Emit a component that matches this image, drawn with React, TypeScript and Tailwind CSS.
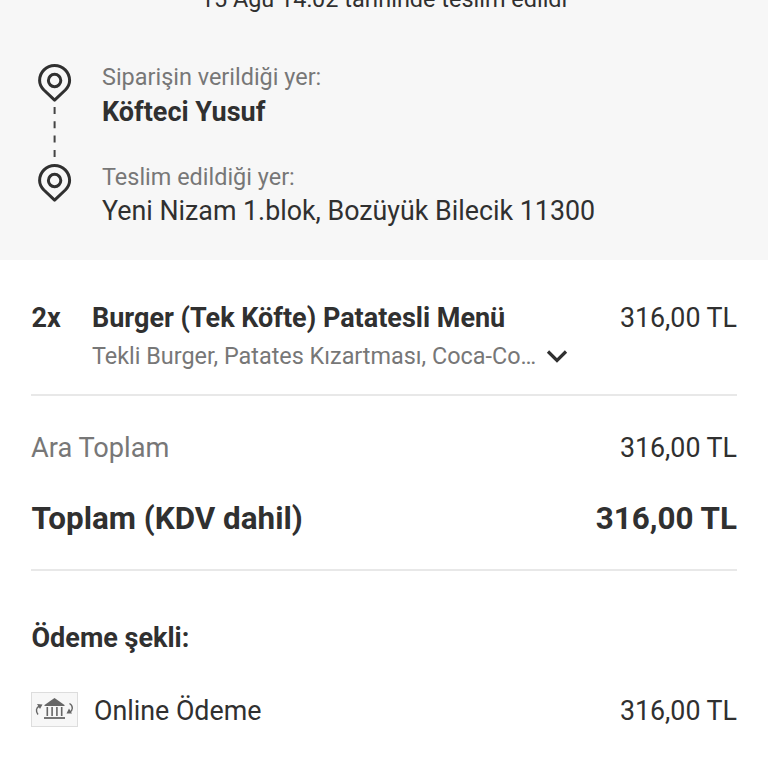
const PRICE = "316,00 TL"

function PinIcon() {
  return (
    <svg className="block h-[40px] w-[36px]" viewBox="0 0 36 40" fill="none" stroke="#303030" strokeWidth="3">
      <path d="M17.6 37.2L6.9 27C4.2 24.2 2.6 21.3 2.6 17.5A15 15 0 0 1 32.6 17.5C32.6 21.3 31 24.2 28.3 27Z" strokeLinejoin="round" />
      <circle cx="17.6" cy="17.5" r="6.2" />
    </svg>
  )
}

function BankIcon() {
  return (
    <svg className="block h-[35px] w-[47px] border border-[#ddd] bg-[#f7f7f7]" viewBox="0 0 45 33" fill="none" stroke="#666">
      <path d="M12.5 12L22.5 5L32.5 12V13H12.5Z" fill="#666" stroke="none" />
      <path d="M15.3 14V23M20.1 14V23M24.9 14V23M29.7 14V23" strokeWidth="1.6" />
      <path d="M12 25H33" strokeWidth="1.8" />
      <path d="M6 21.5C3.5 18 4 14.5 7.5 13M37.5 10.5C41.5 13 41 17.5 37.5 19.5" strokeWidth="1.4" />
      <path d="M5 11L10.5 11.5L8 16ZM37 15.5L34.5 20.5L40 20.5Z" fill="#666" stroke="none" />
    </svg>
  )
}

export default function App() {
  return (
    <div className="h-[768px] w-[768px] overflow-hidden bg-white font-['Roboto',sans-serif] text-[27px] leading-[32px] text-[#303030]">
      <header className="h-[260px] bg-[#f7f7f7]">
        <div className="flex h-[63px] justify-center text-[23.45px]">
          <p className="-mt-[17px] whitespace-nowrap">15 Ağu 14:02 tarihinde teslim edildi</p>
        </div>
        <div className="flex pl-[37px]">
          <div className="flex w-[36px] flex-col items-center">
            <PinIcon />
            <svg className="h-[60px] w-[36px]" viewBox="0 0 36 60">
              <path d="M17.6 4V54" stroke="#444" strokeWidth="2" strokeDasharray="7 7.3" />
            </svg>
            <PinIcon />
          </div>
          <div className="ml-[29px] whitespace-nowrap">
            <div className="h-[99px]">
              <p className="text-[23.45px] leading-[28px] text-[#777]">Siparişin verildiği yer:</p>
              <p className="mt-[5px] font-bold">Köfteci Yusuf</p>
            </div>
            <p className="pt-px text-[23.45px] leading-[28px] text-[#777]">Teslim edildiği yer:</p>
            <p className="mt-[4px] text-[26.8px]">Yeni Nizam 1.blok, Bozüyük Bilecik 11300</p>
          </div>
        </div>
      </header>

      <main className="px-[31px]">
        <section className="flex h-[136px] border-b-2 border-[#e8e8e8] pt-[42px] whitespace-nowrap">
          <span className="w-[61px] pl-[0.5px] font-bold">2x</span>
          <div className="flex-1">
            <h2 className="font-bold">Burger (Tek Köfte) Patatesli Menü</h2>
            <div className="mt-[8px] flex items-center text-[23.4px] leading-[28px] text-[#777]">
              <span className="w-[444px]">Tekli Burger, Patates Kızartması, Coca-Co…</span>
              <svg className="ml-[10px] h-[14px] w-[22px]" viewBox="0 0 22 14" fill="none" stroke="#303030" strokeWidth="3.2">
                <path d="M2 2.5L11 11.5L20 2.5" />
              </svg>
            </div>
          </div>
          <span className="text-[26.8px]">{PRICE}</span>
        </section>

        <section className="h-[175px] border-b-2 border-[#e8e8e8] pt-[36px]">
          <div className="flex justify-between">
            <span className="text-[27.2px] text-[#777]">Ara Toplam</span>
            <span className="text-[26.8px]">{PRICE}</span>
          </div>
          <div className="mt-[39px] flex justify-between text-[31.4px] font-bold">
            <span className="pl-[0.5px]">Toplam (KDV dahil)</span>
            <span>{PRICE}</span>
          </div>
        </section>

        <section className="pt-[51px]">
          <h2 className="pl-[0.5px] font-bold">Ödeme şekli:</h2>
          <div className="mt-[38px] flex items-center text-[26.8px]">
            <BankIcon />
            <span className="ml-[16px] pt-[2px]">Online Ödeme</span>
            <span className="ml-auto pt-[2px]">{PRICE}</span>
          </div>
        </section>
      </main>
    </div>
  )
}
